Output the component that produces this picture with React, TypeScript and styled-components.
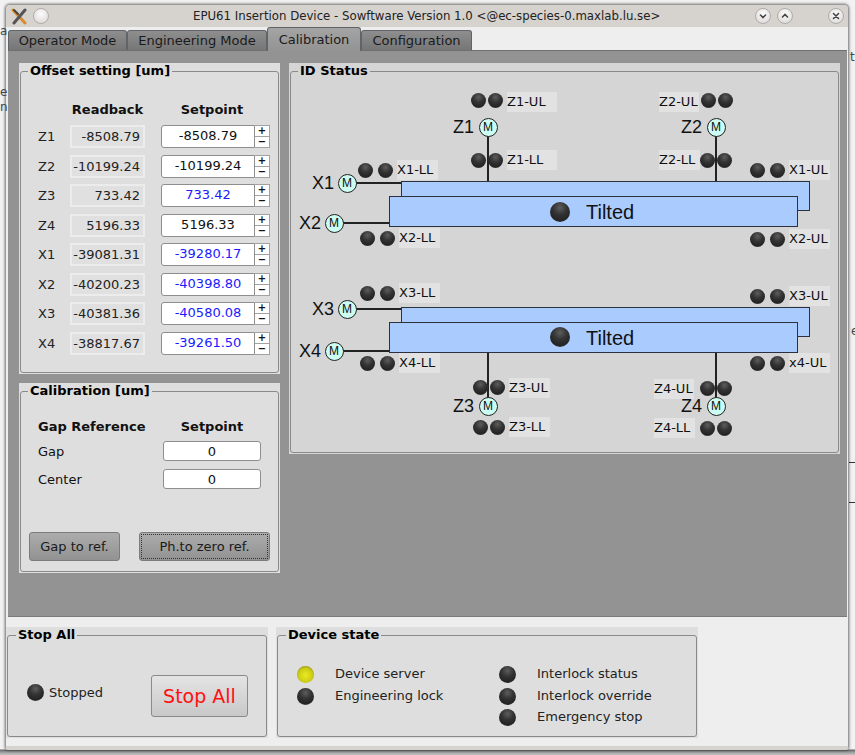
import React from 'react';
import styled, { createGlobalStyle } from 'styled-components';

const GlobalStyle = createGlobalStyle`
  html, body { margin: 0; padding: 0; }
  body {
    width: 855px;
    height: 755px;
    overflow: hidden;
    background: #e4e4e4;
    font-family: "DejaVu Sans", sans-serif;
    color: #111;
  }
  * { box-sizing: border-box; }
`;

const Desktop = styled.div`
  position: relative;
  width: 855px;
  height: 755px;
  padding: 4px 6px 6px 5px;
  background: linear-gradient(#f2f2f2, #f2f2f2 749px, #666 750px, #999 752px, #c4c4c4 755px);
`;

const Window = styled.div`
  width: 844px;
  height: 746px;
  display: flex;
  flex-direction: column;
  background: #eeeeee;
  border-radius: 5px 5px 3px 3px;
  border: 1px solid #9a9a9a;
  border-bottom: 4px solid #d6d2ce;
  box-shadow: 0 0 3px rgba(0, 0, 0, 0.6);
  overflow: hidden;
`;

const TitleBar = styled.div`
  height: 22px;
  flex: none;
  display: flex;
  align-items: center;
  background: #d6d2ce;
  padding: 0 4px 0 5px;
  font-size: 11.75px;
  color: #222;
`;

const TitleText = styled.div`
  margin-left: 144px;
  width: 470px;
  white-space: nowrap;
`;

const TitleButton = styled.div<{ $gap?: number }>`
  width: 16px;
  height: 16px;
  margin-left: ${(p) => p.$gap ?? 0}px;
  border-radius: 50%;
  border: 1px solid #b0aca8;
  background: radial-gradient(circle at 50% 35%, #fbfbfb, #d8d6d3);
  display: flex;
  align-items: center;
  justify-content: center;
`;

const TabBar = styled.div`
  height: 23px;
  flex: none;
  display: flex;
  align-items: flex-end;
  padding-left: 2px;
`;

const Tab = styled.div<{ $active?: boolean; $w: number }>`
  width: ${(p) => p.$w}px;
  height: ${(p) => (p.$active ? 24 : 20)}px;
  margin-bottom: ${(p) => (p.$active ? -1 : 0)}px;
  display: flex;
  align-items: center;
  justify-content: center;
  font-size: 13px;
  color: #1a1a1a;
  border: 1px solid #5f6468;
  border-bottom: none;
  border-radius: 3px 3px 0 0;
  background: ${(p) =>
    p.$active ? 'linear-gradient(#a4a4a4, #939393)' : 'linear-gradient(#8e8e8e, #767676)'};
  z-index: ${(p) => (p.$active ? 1 : 0)};
`;

const TabPane = styled.div`
  height: 567px;
  flex: none;
  margin: 0 1px 0 2px;
  padding: 12px 6px 0 11px;
  display: flex;
  gap: 9px;
  align-items: flex-start;
  background: #939393;
  border-top: 1px solid #6f6f6f;
  border-bottom: 1px solid #7a7a7a;
`;

const LeftColumn = styled.div`
  width: 261px;
  display: flex;
  flex-direction: column;
  gap: 9px;
`;

const Panel = styled.div<{ $w?: number; $h: number; $bg?: string }>`
  width: ${(p) => (p.$w ? `${p.$w}px` : '100%')};
  height: ${(p) => p.$h}px;
  flex: none;
  padding: 0 1px 1px 1px;
  background: ${(p) => p.$bg ?? '#dedede'};
`;

const Frame = styled.fieldset`
  height: 100%;
  margin: 0;
  padding: 0;
  min-width: 0;
  border: 1px solid #8a8a8a;
  border-radius: 3px;
`;

const Legend = styled.legend<{ $inset?: number }>`
  margin-left: ${(p) => p.$inset ?? 7}px;
  padding: 0 2px;
  font-size: 13px;
  line-height: 16px;
  font-weight: bold;
  color: #000;
`;

const OffsetGrid = styled.div`
  display: grid;
  grid-template-columns: 32px 75px 16px 109px;
  grid-template-rows: 20px;
  grid-auto-rows: 23px;
  row-gap: 6.45px;
  padding: 20px 0 0 17px;
  font-size: 13px;
  align-items: center;
`;

const ColumnHead = styled.div<{ $col: number; $trim?: number }>`
  grid-column: ${(p) => p.$col};
  padding-right: ${(p) => p.$trim ?? 0}px;
  font-weight: bold;
  font-size: 13px;
  text-align: center;
  color: #111;
  white-space: nowrap;
`;

const RowLabel = styled.div`
  color: #222;
`;

const Readback = styled.div`
  height: 23px;
  line-height: 19px;
  padding-right: 3px;
  text-align: right;
  font-size: 13px;
  background: #e0e0e0;
  border: 2px solid #ececec;
  color: #222;
`;

const SpinField = styled.div`
  grid-column: 4;
  height: 23px;
  display: flex;
`;

const SetValue = styled.div<{ $dirty?: boolean }>`
  width: 94px;
  line-height: 19px;
  text-align: center;
  font-size: 13px;
  background: #fff;
  border: 1px solid #8e8e8e;
  border-radius: 3px 0 0 3px;
  color: ${(p) => (p.$dirty ? '#1a1aff' : '#111')};
`;

const SpinButtons = styled.div`
  width: 15px;
  display: flex;
  flex-direction: column;
`;

const SpinButton = styled.div`
  flex: 1;
  font-size: 10px;
  font-weight: bold;
  line-height: 10px;
  text-align: center;
  background: #fff;
  border: 1px solid #a2a2a2;
  border-left: none;
  & + & { border-top: none; }
`;

const CalGrid = styled.div`
  display: grid;
  grid-template-columns: 125px 98px;
  grid-template-rows: 14px;
  grid-auto-rows: 20px;
  row-gap: 8px;
  padding: 20px 0 0 17px;
  font-size: 13px;
  align-items: center;
`;

const CalHead = styled.div<{ $center?: boolean }>`
  font-weight: bold;
  white-space: nowrap;
  text-align: ${(p) => (p.$center ? 'center' : 'left')};
`;

const CalField = styled.div`
  height: 20px;
  line-height: 19px;
  text-align: center;
  background: #fff;
  border: 1px solid #8e8e8e;
  border-radius: 3px;
`;

const CalButtons = styled.div`
  display: flex;
  gap: 19px;
  padding: 43px 0 0 8px;
`;

const PushButton = styled.div<{ $w: number; $focus?: boolean }>`
  width: ${(p) => p.$w}px;
  height: 29px;
  padding: 2px;
  font-size: 13px;
  color: #1a1a1a;
  border: 1px solid #7c7c7c;
  border-radius: 3px;
  background: linear-gradient(#acacac, #929292);
  & > span {
    display: flex;
    height: 100%;
    align-items: center;
    justify-content: center;
    outline: ${(p) => (p.$focus ? '1px dotted #333' : 'none')};
  }
`;

const DiagramArea = styled.div`
  position: relative;
  height: 100%;
`;

const Bar = styled.div<{ $x: number; $y: number; $w: number; $h: number; $front?: boolean }>`
  position: absolute;
  left: ${(p) => p.$x}px;
  top: ${(p) => p.$y}px;
  width: ${(p) => p.$w}px;
  height: ${(p) => p.$h}px;
  background: #a9cbfd;
  border: 1.5px solid #2b3140;
  z-index: ${(p) => (p.$front ? 2 : 1)};
`;

const BarText = styled.div<{ $x: number; $y: number }>`
  position: absolute;
  left: ${(p) => p.$x}px;
  top: ${(p) => p.$y}px;
  font-family: "Liberation Sans", Arial, sans-serif;
  font-size: 20px;
  line-height: 24px;
  color: #111;
  z-index: 3;
`;

const Wire = styled.div<{ $x: number; $y: number; $w: number; $h: number }>`
  position: absolute;
  left: ${(p) => p.$x}px;
  top: ${(p) => p.$y}px;
  width: ${(p) => p.$w}px;
  height: ${(p) => p.$h}px;
  background: #222;
`;

const Led = styled.div<{ $size?: number; $on?: boolean }>`
  width: ${(p) => p.$size ?? 15}px;
  height: ${(p) => p.$size ?? 15}px;
  flex: none;
  border-radius: 50%;
  background: ${(p) =>
    p.$on
      ? 'radial-gradient(circle at 50% 55%, #eaea20 0%, #cccc16 55%, #77771a 90%, #555 100%)'
      : 'radial-gradient(circle at 50% 28%, #5d5d5d 0%, #333 40%, #242424 72%, #4a4a4a 100%)'};
`;

const PlacedLed = styled(Led)<{ $x: number; $y: number }>`
  position: absolute;
  left: ${(p) => p.$x - (p.$size ?? 15) / 2}px;
  top: ${(p) => p.$y - (p.$size ?? 15) / 2}px;
  z-index: 4;
`;

const StateLed = styled(Led)`
  margin-top: 2px;
`;

const Tag = styled.div<{ $x: number; $y: number; $w: number }>`
  position: absolute;
  left: ${(p) => p.$x}px;
  top: ${(p) => p.$y}px;
  width: ${(p) => p.$w}px;
  height: 20px;
  line-height: 20px;
  font-size: 13px;
  background: #e2e2e2;
  color: #111;
  white-space: nowrap;
`;

const AxisName = styled.div<{ $x: number; $y: number }>`
  position: absolute;
  left: ${(p) => p.$x}px;
  top: ${(p) => p.$y - 11}px;
  font-family: "Liberation Sans", Arial, sans-serif;
  font-size: 18px;
  line-height: 22px;
  color: #111;
`;

const Motor = styled.div<{ $x: number; $y: number }>`
  position: absolute;
  left: ${(p) => p.$x - 9.5}px;
  top: ${(p) => p.$y - 9.5}px;
  width: 19px;
  height: 19px;
  border-radius: 50%;
  background: #ccfdf3;
  border: 1.5px solid #222;
  font-family: "Liberation Sans", Arial, sans-serif;
  font-size: 12px;
  line-height: 16px;
  text-align: center;
  color: #111;
  z-index: 4;
`;

const BottomRow = styled.div`
  display: flex;
  gap: 8px;
  padding: 10px 0 0 0;
`;

const StopBody = styled.div`
  display: flex;
  padding: 32px 0 0 19px;
`;

const StateLabel = styled.div`
  font-size: 13px;
  color: #222;
  white-space: nowrap;
`;

const StoppedRow = styled.div`
  display: flex;
  align-items: center;
  gap: 5px;
  height: 17px;
  margin-top: 9px;
  width: 124px;
`;

const StopButton = styled.div`
  width: 97px;
  height: 42px;
  display: flex;
  align-items: center;
  justify-content: center;
  font-size: 19px;
  color: #ff1010;
  border: 1px solid #8a8a8a;
  border-radius: 3px;
  background: linear-gradient(#e4e4e4, #c8c8c8);
`;

const StateBody = styled.div`
  display: grid;
  grid-template-columns: 202px 160px;
  padding: 22px 0 0 19px;
`;

const StateColumn = styled.div`
  display: flex;
  flex-direction: column;
  gap: 4.5px;
`;

const StateRow = styled.div`
  display: flex;
  align-items: center;
  gap: 21px;
  height: 17px;
`;

const Fragment = styled.div<{ $x: number; $y: number }>`
  position: absolute;
  left: ${(p) => p.$x}px;
  top: ${(p) => p.$y}px;
  font-size: 12px;
  line-height: 12px;
  color: #444;
`;

const StrayRule = styled.div<{ $y: number }>`
  position: absolute;
  left: 849px;
  top: ${(p) => p.$y}px;
  width: 6px;
  height: 1px;
  background: #333;
`;

const CloseGlyph = ({ d }: { d: string }) => (
  <svg width="10" height="10" viewBox="0 0 10 10">
    <path d={d} fill="none" stroke="#444" strokeWidth="1.6" strokeLinecap="round" />
  </svg>
);

const XLogo = () => (
  <svg width="17" height="17" viewBox="0 0 17 17">
    <path d="M2 2 L14 15" stroke="#d98a2c" strokeWidth="3" strokeLinecap="round" />
    <path d="M14 2 L3 15" stroke="#555" strokeWidth="3" strokeLinecap="round" />
    <path d="M3 2 L7 6" stroke="#444" strokeWidth="2" strokeLinecap="round" />
  </svg>
);

const offsets = [
  { name: 'Z1', read: '-8508.79', set: '-8508.79' },
  { name: 'Z2', read: '-10199.24', set: '-10199.24' },
  { name: 'Z3', read: '733.42', set: '733.42', dirty: true },
  { name: 'Z4', read: '5196.33', set: '5196.33' },
  { name: 'X1', read: '-39081.31', set: '-39280.17', dirty: true },
  { name: 'X2', read: '-40200.23', set: '-40398.80', dirty: true },
  { name: 'X3', read: '-40381.36', set: '-40580.08', dirty: true },
  { name: 'X4', read: '-38817.67', set: '-39261.50', dirty: true },
];

// coordinates below are page pixels, OX/OY take them into the ID Status canvas
const OX = 291;
const OY = 79;

const limits = [
  { label: 'Z1-UL', leds: [478, 495], y: 100, tx: 507, ty: 92, tw: 50 },
  { label: 'Z1-LL', leds: [478, 495], y: 160, tx: 507, ty: 150, tw: 50 },
  { label: 'X1-LL', leds: [365, 385], y: 170, tx: 397, ty: 160, tw: 41 },
  { label: 'X2-LL', leds: [367, 387], y: 238, tx: 399, ty: 228, tw: 41 },
  { label: 'Z2-UL', leds: [708, 725], y: 100, tx: 659, ty: 92, tw: 40 },
  { label: 'Z2-LL', leds: [707, 724], y: 160, tx: 659, ty: 150, tw: 41 },
  { label: 'X1-UL', leds: [757, 777], y: 170, tx: 789, ty: 160, tw: 41 },
  { label: 'X2-UL', leds: [757, 777], y: 239, tx: 789, ty: 229, tw: 41 },
  { label: 'X3-LL', leds: [367, 387], y: 293, tx: 399, ty: 283, tw: 41 },
  { label: 'X4-LL', leds: [367, 387], y: 363, tx: 399, ty: 353, tw: 41 },
  { label: 'X3-UL', leds: [757, 777], y: 296, tx: 789, ty: 286, tw: 41 },
  { label: 'x4-UL', leds: [757, 777], y: 363, tx: 789, ty: 353, tw: 41 },
  { label: 'Z3-UL', leds: [480, 497], y: 387, tx: 509, ty: 378, tw: 41 },
  { label: 'Z3-LL', leds: [480, 497], y: 427, tx: 509, ty: 417, tw: 41 },
  { label: 'Z4-UL', leds: [707, 724], y: 388, tx: 654, ty: 379, tw: 40 },
  { label: 'Z4-LL', leds: [707, 724], y: 428, tx: 654, ty: 418, tw: 41 },
];

const motors = [
  { name: 'Z1', x: 488, y: 127, tx: 453 },
  { name: 'Z2', x: 716, y: 127, tx: 681 },
  { name: 'X1', x: 347, y: 183, tx: 312 },
  { name: 'X2', x: 334, y: 223, tx: 299 },
  { name: 'X3', x: 347, y: 309, tx: 312 },
  { name: 'X4', x: 334, y: 351, tx: 299 },
  { name: 'Z3', x: 488, y: 406, tx: 453 },
  { name: 'Z4', x: 716, y: 406, tx: 681 },
];

const wires = [
  { x: 487, y: 136, w: 1.5, h: 45 },
  { x: 715, y: 136, w: 1.5, h: 45 },
  { x: 356, y: 182, w: 46, h: 1.5 },
  { x: 343, y: 222, w: 46, h: 1.5 },
  { x: 356, y: 308, w: 46, h: 1.5 },
  { x: 343, y: 350, w: 46, h: 1.5 },
  { x: 487, y: 352, w: 1.5, h: 46 },
  { x: 715, y: 352, w: 1.5, h: 46 },
];

const undulators = [
  { back: 181, front: 196, led: 212, text: 200 },
  { back: 307, front: 322, led: 337, text: 326 },
];

const stateLeft = [
  { label: 'Device server', on: true },
  { label: 'Engineering lock' },
];
const stateRight = [
  { label: 'Interlock status' },
  { label: 'Interlock override' },
  { label: 'Emergency stop' },
];

export default function App() {
  return (
    <Desktop>
      <GlobalStyle />
      <Fragment $x={0} $y={25}>a</Fragment>
      <Fragment $x={0} $y={86}>e</Fragment>
      <Fragment $x={0} $y={101}>n</Fragment>
      <Fragment $x={850} $y={51}>ti</Fragment>
      <Fragment $x={851} $y={325}>e</Fragment>
      <StrayRule $y={462} />
      <StrayRule $y={502} />
      <Window>
        <TitleBar>
          <XLogo />
          <TitleButton $gap={5} />
          <TitleText>EPU61 Insertion Device - Sowftware Version 1.0 &lt;@ec-species-0.maxlab.lu.se&gt;</TitleText>
          <TitleButton $gap={92}><CloseGlyph d="M2.5 4 L5 6.5 L7.5 4" /></TitleButton>
          <TitleButton $gap={6}><CloseGlyph d="M2.5 6 L5 3.5 L7.5 6" /></TitleButton>
          <TitleButton $gap={35}><CloseGlyph d="M2.5 2.5 L7.5 7.5 M7.5 2.5 L2.5 7.5" /></TitleButton>
        </TitleBar>
        <TabBar>
          <Tab $w={119}>Operator Mode</Tab>
          <Tab $w={140}>Engineering Mode</Tab>
          <Tab $w={94} $active>Calibration</Tab>
          <Tab $w={111}>Configuration</Tab>
        </TabBar>
        <TabPane>
          <LeftColumn>
            <Panel $h={311}>
              <Frame>
                <Legend>Offset setting [um]</Legend>
                <OffsetGrid>
                  <ColumnHead $col={2}>Readback</ColumnHead>
                  <ColumnHead $col={4} $trim={7}>Setpoint</ColumnHead>
                  {offsets.map((o) => (
                    <React.Fragment key={o.name}>
                      <RowLabel>{o.name}</RowLabel>
                      <Readback>{o.read}</Readback>
                      <SpinField>
                        <SetValue $dirty={o.dirty}>{o.set}</SetValue>
                        <SpinButtons>
                          <SpinButton>+</SpinButton>
                          <SpinButton>−</SpinButton>
                        </SpinButtons>
                      </SpinField>
                    </React.Fragment>
                  ))}
                </OffsetGrid>
              </Frame>
            </Panel>
            <Panel $h={190}>
              <Frame>
                <Legend>Calibration [um]</Legend>
                <CalGrid>
                  <CalHead>Gap Reference</CalHead>
                  <CalHead $center>Setpoint</CalHead>
                  <div>Gap</div>
                  <CalField>0</CalField>
                  <div>Center</div>
                  <CalField>0</CalField>
                </CalGrid>
                <CalButtons>
                  <PushButton $w={91}><span>Gap to ref.</span></PushButton>
                  <PushButton $w={131} $focus><span>Ph.to zero ref.</span></PushButton>
                </CalButtons>
              </Frame>
            </Panel>
          </LeftColumn>
          <Panel $w={551} $h={391} $bg="#d5d5d5">
            <Frame>
              <Legend>ID Status</Legend>
              <DiagramArea>
                {undulators.map((u) => (
                  <React.Fragment key={u.back}>
                    <Bar $x={401 - OX} $y={u.back - OY} $w={409} $h={30} />
                    <Bar $x={389 - OX} $y={u.front - OY} $w={409} $h={31} $front />
                    <PlacedLed $x={560 - OX} $y={u.led - OY} $size={20} />
                    <BarText $x={586 - OX} $y={u.text - OY}>Tilted</BarText>
                  </React.Fragment>
                ))}
                {wires.map((w) => (
                  <Wire key={`${w.x}-${w.y}`} $x={w.x - OX} $y={w.y - OY} $w={w.w} $h={w.h} />
                ))}
                {motors.map((m) => (
                  <React.Fragment key={m.name}>
                    <AxisName $x={m.tx - OX} $y={m.y - OY}>{m.name}</AxisName>
                    <Motor $x={m.x - OX} $y={m.y - OY}>M</Motor>
                  </React.Fragment>
                ))}
                {limits.map((l) => (
                  <React.Fragment key={l.label}>
                    <PlacedLed $x={l.leds[0] - OX} $y={l.y - OY} />
                    <PlacedLed $x={l.leds[1] - OX} $y={l.y - OY} />
                    <Tag $x={l.tx - OX} $y={l.ty - OY} $w={l.tw}>{l.label}</Tag>
                  </React.Fragment>
                ))}
              </DiagramArea>
            </Frame>
          </Panel>
        </TabPane>
        <BottomRow>
          <Panel $w={262} $h={111}>
            <Frame>
              <Legend $inset={8}>Stop All</Legend>
              <StopBody>
                <StoppedRow>
                  <Led $size={17} />
                  <StateLabel>Stopped</StateLabel>
                </StoppedRow>
                <StopButton>Stop All</StopButton>
              </StopBody>
            </Frame>
          </Panel>
          <Panel $w={422} $h={111}>
            <Frame>
              <Legend $inset={8}>Device state</Legend>
              <StateBody>
                <StateColumn>
                  {stateLeft.map((s) => (
                    <StateRow key={s.label}>
                      <StateLed $size={17} $on={s.on} />
                      <StateLabel>{s.label}</StateLabel>
                    </StateRow>
                  ))}
                </StateColumn>
                <StateColumn>
                  {stateRight.map((s) => (
                    <StateRow key={s.label}>
                      <StateLed $size={17} />
                      <StateLabel>{s.label}</StateLabel>
                    </StateRow>
                  ))}
                </StateColumn>
              </StateBody>
            </Frame>
          </Panel>
        </BottomRow>
      </Window>
    </Desktop>
  );
}
